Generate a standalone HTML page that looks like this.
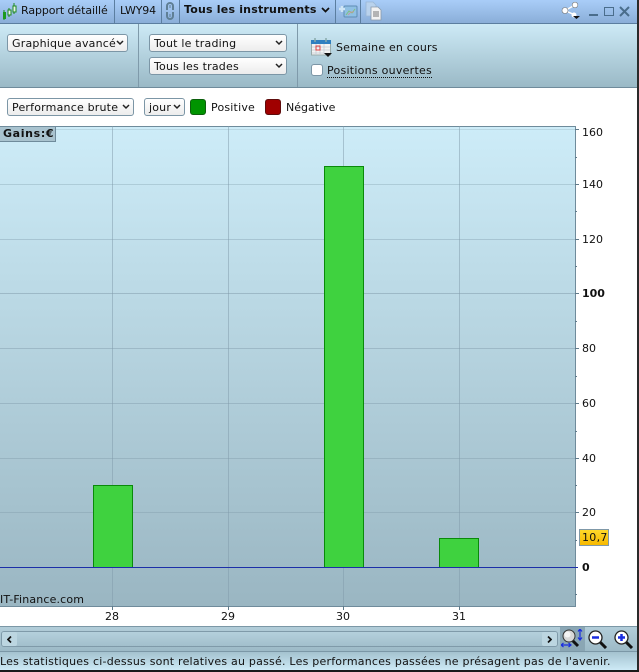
<!DOCTYPE html>
<html><head><meta charset="utf-8">
<style>
*{box-sizing:border-box}
html,body{margin:0;padding:0;width:639px;height:672px;overflow:hidden;background:#fff}
body{font:11px "DejaVu Sans",sans-serif;color:#111;position:relative}
.a{position:absolute;white-space:nowrap;line-height:14px}
.sel{position:absolute;height:18px;border:1px solid #7c96a6;border-radius:3px;background:linear-gradient(#fff,#ececec);padding-left:4px;padding-top:1px;line-height:15px;font-size:11px;letter-spacing:.2px;white-space:nowrap;overflow:hidden}
.sel svg{position:absolute;right:3px;top:5px}
.v{position:absolute;width:1px;background:#7f9aaa}
.h{position:absolute;height:1px;left:0;width:575px;background:#88a4b3}
.g{position:absolute;top:126px;height:480px;width:1px;background:#7f9aa9;opacity:.5}
.bar{position:absolute;width:40px;background:#3fd23f;border:1px solid #0a8a0a;border-bottom:none}
.t{position:absolute;left:575px;height:1px;background:#5f7a8a}
.yl{position:absolute;left:582px;line-height:12px;font-size:11px}
.xl{position:absolute;top:611px;line-height:12px;font-size:11px;width:24px;text-align:center}
</style></head><body>
<!-- top bar -->
<div class="a" style="left:0;top:0;width:639px;height:24px;background:linear-gradient(#a9cdf8,#8aaed8);border-bottom:1px solid #5b7ea0"></div>
<svg class="a" style="left:2px;top:2px" width="16" height="18" viewBox="0 0 16 18"><path d="M2 8v10M7 6v9M12 1v11" stroke="#1d8a1d" stroke-width="1"/><rect x="1" y="10" width="3" height="7" fill="#1d9a1d"/><rect x="6" y="8" width="3" height="5" fill="#e8f4e8" stroke="#1d8a1d" stroke-width="1"/><rect x="11" y="4" width="3" height="6" fill="#e8f4e8" stroke="#1d8a1d" stroke-width="1"/></svg>
<div class="a" style="left:21px;top:4px;letter-spacing:-.08px">Rapport détaillé</div>
<div class="v" style="left:114px;top:0;height:23px;background:#5b7ea0"></div>
<div class="a" style="left:120px;top:4px;letter-spacing:-.15px">LWY94</div>
<div class="v" style="left:161px;top:0;height:23px;background:#5b7ea0"></div>
<svg class="a" style="left:165px;top:1px" width="10" height="20" viewBox="0 0 10 20"><path d="M2 9V5a3 3 0 0 1 6 0v4M2 11v4a3 3 0 0 0 6 0v-4" fill="none" stroke="#5f7f95" stroke-width="2"/><path d="M5 4v3M5 13v3" stroke="#5f7f95" stroke-width="1"/></svg>
<div class="v" style="left:179px;top:0;height:23px;background:#5b7ea0"></div>
<div class="a" style="left:184px;top:3px;font-weight:bold;letter-spacing:.2px">Tous les instruments</div>
<svg class="a" style="left:321px;top:7px" width="9" height="6" viewBox="0 0 9 6"><path d="M1 1l3.500 3.500L8 1" fill="none" stroke="#111" stroke-width="1.700"/></svg>
<div class="v" style="left:335px;top:0;height:23px;background:#5b7ea0"></div>
<svg class="a" style="left:339px;top:3px" width="19" height="16" viewBox="0 0 19 16"><rect x="5" y="3" width="13" height="11" rx="1" fill="#8fc0e4" stroke="#5f8db5"/><path d="M0 6h6M3 3v6" stroke="#cfe6f6" stroke-width="2.500"/><path d="M7 12l3-4 3 2 3-4" fill="none" stroke="#7fbf80"/><path d="M9 12l3-3 3 0" fill="none" stroke="#d98f8f" stroke-width=".7"/></svg>
<div class="v" style="left:360px;top:0;height:23px;background:#5b7ea0"></div>
<svg class="a" style="left:365px;top:1px" width="17" height="20" viewBox="0 0 17 20"><path d="M1 1h7l3 3v11H1z" fill="#b9d2ec" stroke="#9ab6d4" stroke-width=".8"/><path d="M6 6h7l3 3v10H6z" fill="#f2f2f2" stroke="#8a9aaa" stroke-width=".8"/><path d="M8 11h6M8 13h6M8 15h6" stroke="#777"/></svg>
<svg class="a" style="left:560px;top:1px" width="22" height="19" viewBox="0 0 22 19"><path d="M15 4L5 9.500l11 5" fill="none" stroke="#fff" stroke-width="1.500"/><circle cx="15" cy="4" r="2.800" fill="#fff" stroke="#777" stroke-width=".6"/><circle cx="5" cy="9.500" r="3" fill="#fff" stroke="#777" stroke-width=".6"/><circle cx="14" cy="14" r="2.500" fill="#fff"/><path d="M13 15h7l-3.500 3z" fill="#111"/></svg>
<div class="a" style="left:589px;top:14px;width:9px;height:2px;background:#4a6d8c"></div>
<div class="a" style="left:604px;top:7px;width:10px;height:9px;border:1.500px solid #4a6d8c"></div>
<svg class="a" style="left:619px;top:6px" width="12" height="11" viewBox="0 0 12 11"><path d="M1 1l9 9M10 1L1 10" stroke="#4a6d8c" stroke-width="2"/></svg>
<!-- toolbar -->
<div class="a" style="left:0;top:24px;width:639px;height:64px;background:linear-gradient(#cdeaf6,#9ab9c6);border-bottom:1px solid #6f8b9b"></div>
<div class="v" style="left:138px;top:24px;height:63px"></div>
<div class="v" style="left:297px;top:24px;height:63px"></div>
<div class="sel" style="left:7px;top:34px;width:121px">Graphique avancé<svg width="8" height="6" viewBox="0 0 8 6" style="background:#f4f4f4"><path d="M1 1l3 3 3-3" fill="none" stroke="#222" stroke-width="1.500"/></svg></div>
<div class="sel" style="left:149px;top:34px;width:138px">Tout le trading<svg width="8" height="6" viewBox="0 0 8 6"><path d="M1 1l3 3 3-3" fill="none" stroke="#222" stroke-width="1.500"/></svg></div>
<div class="sel" style="left:149px;top:57px;width:138px">Tous les trades<svg width="8" height="6" viewBox="0 0 8 6"><path d="M1 1l3 3 3-3" fill="none" stroke="#222" stroke-width="1.500"/></svg></div>
<svg class="a" style="left:311px;top:38px" width="21" height="19" viewBox="0 0 21 19"><rect x=".5" y="3" width="19" height="14" fill="#f3f3f3" stroke="#9aa"/><rect x="0" y="2" width="20" height="4" fill="#2f7fc0"/><path d="M4 0v4M15 0v4" stroke="#8aa" stroke-width="1.500"/><path d="M1 9h18M1 12h18M1 15h12M5 6v11M9 6v11M13 6v11" stroke="#c4ccd4" stroke-width=".8"/><rect x="5" y="8" width="4" height="4" fill="none" stroke="#e04040"/><path d="M13 15h8l-4 4z" fill="#111"/></svg>
<div class="a" style="left:336px;top:41px;letter-spacing:.18px">Semaine en cours</div>
<div class="a" style="left:311px;top:64px;width:12px;height:12px;background:#fff;border:1px solid #7c96a6;border-radius:3px"></div>
<div class="a" style="left:327px;top:64px;border-bottom:1px dotted #111;line-height:13px;letter-spacing:.26px">Positions ouvertes</div>
<!-- filters -->
<div class="sel" style="left:7px;top:98px;width:127px">Performance brute<svg width="8" height="6" viewBox="0 0 8 6"><path d="M1 1l3 3 3-3" fill="none" stroke="#222" stroke-width="1.500"/></svg></div>
<div class="sel" style="left:144px;top:98px;width:41px">jour<svg width="8" height="6" viewBox="0 0 8 6"><path d="M1 1l3 3 3-3" fill="none" stroke="#222" stroke-width="1.500"/></svg></div>
<div class="a" style="left:190px;top:99px;width:16px;height:16px;background:#009400;border:1px solid #0c5f0c;border-radius:3px"></div>
<div class="a" style="left:211px;top:101px;letter-spacing:.2px">Positive</div>
<div class="a" style="left:265px;top:99px;width:16px;height:16px;background:#a00000;border:1px solid #5f0c0c;border-radius:3px"></div>
<div class="a" style="left:286px;top:101px;letter-spacing:0">Négative</div>
<!-- plot -->
<div class="a" style="left:0;top:126px;width:576px;height:481px;background:linear-gradient(#cdecf8,#9ab6c2);border-top:1px solid #6f8b9b;border-right:1px solid #6f8b9b;border-bottom:1px solid #6f8b9b"></div>
<div class="h" style="top:129px;opacity:.3"></div>
<div class="h" style="top:184px;opacity:.4"></div>
<div class="h" style="top:239px;opacity:.45"></div>
<div class="h" style="top:293px;opacity:.6"></div>
<div class="h" style="top:348px;opacity:.55"></div>
<div class="h" style="top:403px;opacity:.55"></div>
<div class="h" style="top:458px;opacity:.55"></div>
<div class="h" style="top:512px;opacity:.55"></div>
<div class="g" style="left:112px"></div>
<div class="g" style="left:228px"></div>
<div class="g" style="left:343px"></div>
<div class="g" style="left:459px"></div>
<div class="bar" style="left:93px;top:485px;height:82px"></div>
<div class="bar" style="left:324px;top:166px;height:401px"></div>
<div class="bar" style="left:439px;top:538px;height:29px"></div>
<div class="a" style="left:0;top:567px;width:578px;height:1px;background:#1c2fa8"></div>
<div class="a" style="left:0;top:127px;width:56px;height:15px;background:#a9c3cf;border-right:1px solid #6f8b9b;border-bottom:1px solid #6f8b9b;font-weight:bold;padding-left:3px;line-height:14px;letter-spacing:.65px">Gains:€</div>
<div class="a" style="left:0;top:593px;line-height:14px;letter-spacing:.15px">IT-Finance.com</div>
<!-- y axis -->
<div class="t" style="top:129px;width:4px"></div><div class="t" style="top:157px;width:2px"></div>
<div class="t" style="top:184px;width:4px"></div><div class="t" style="top:211px;width:2px"></div>
<div class="t" style="top:239px;width:4px"></div><div class="t" style="top:266px;width:2px"></div>
<div class="t" style="top:293px;width:4px"></div><div class="t" style="top:321px;width:2px"></div>
<div class="t" style="top:348px;width:4px"></div><div class="t" style="top:376px;width:2px"></div>
<div class="t" style="top:403px;width:4px"></div><div class="t" style="top:431px;width:2px"></div>
<div class="t" style="top:458px;width:4px"></div><div class="t" style="top:485px;width:2px"></div>
<div class="t" style="top:512px;width:4px"></div><div class="t" style="top:540px;width:2px"></div>
<div class="t" style="top:594px;width:2px"></div>
<div class="yl" style="top:127px">160</div>
<div class="yl" style="top:179px">140</div>
<div class="yl" style="top:234px">120</div>
<div class="yl" style="top:288px;font-weight:bold">100</div>
<div class="yl" style="top:343px">80</div>
<div class="yl" style="top:398px">60</div>
<div class="yl" style="top:453px">40</div>
<div class="yl" style="top:507px">20</div>
<div class="yl" style="top:562px;font-weight:bold">0</div>
<div class="a" style="left:579px;top:529px;width:30px;height:17px;background:linear-gradient(#ffd82a,#f7b900);border:1px solid #7f98a8;line-height:16px;padding-left:2px;letter-spacing:.3px">10,7</div>
<!-- x axis -->
<div class="t" style="left:112px;top:606px;width:1px;height:4px"></div>
<div class="t" style="left:228px;top:606px;width:1px;height:4px"></div>
<div class="t" style="left:343px;top:606px;width:1px;height:4px"></div>
<div class="t" style="left:459px;top:606px;width:1px;height:4px"></div>
<div class="xl" style="left:100px">28</div>
<div class="xl" style="left:216px">29</div>
<div class="xl" style="left:331px">30</div>
<div class="xl" style="left:447px">31</div>
<!-- scrollbar -->
<div class="a" style="left:0;top:626px;width:637px;height:26px;background:linear-gradient(#b2cdd9,#9dbac7);border-top:1px solid #7b97a6;border-bottom:1px solid #7b97a6"></div>
<div class="a" style="left:1px;top:631px;width:557px;height:16px;background:linear-gradient(#b4d0dc,#a2bfcc);border:1px solid #7f9aa9;border-radius:3px"></div>
<div class="a" style="left:2px;top:632px;width:15px;height:14px;background:#bcd6e1;border-radius:2px"></div>
<div class="a" style="left:542px;top:632px;width:15px;height:14px;background:#bcd6e1;border-radius:2px"></div>
<svg class="a" style="left:7px;top:636px" width="5" height="7" viewBox="0 0 5 7"><path d="M4 .5L1 3.500 4 6.500" fill="none" stroke="#111" stroke-width="1.700"/></svg>
<svg class="a" style="left:547px;top:636px" width="5" height="7" viewBox="0 0 5 7"><path d="M1 .5L4 3.500 1 6.500" fill="none" stroke="#111" stroke-width="1.700"/></svg>
<div class="a" style="left:560px;top:627px;width:25px;height:24px;background:#8aa6b4"></div>
<svg class="a" style="left:561px;top:629px" width="24" height="20" viewBox="0 0 24 20"><path d="M11 11l6 6" stroke="#111" stroke-width="3"/><circle cx="8" cy="7" r="6" fill="#d8d8d8" stroke="#333"/><circle cx="6.500" cy="5.500" r="3" fill="#f4f4f4"/><path d="M19 0v11M17 2.500l2-2.500 2 2.500M17 8.500l2 2.500 2-2.500M0 16h10M2.500 14L0 16l2.500 2M7.500 14L10 16l-2.500 2" fill="none" stroke="#1a2ee0" stroke-width="1.200"/></svg>
<svg class="a" style="left:588px;top:630px" width="20" height="19" viewBox="0 0 20 19"><path d="M11 11l7 7" stroke="#111" stroke-width="3"/><circle cx="7.500" cy="7.500" r="6.500" fill="#fff" stroke="#222" stroke-width="1.300"/><path d="M4 7.500h7" stroke="#1a2ee0" stroke-width="2.500"/></svg>
<svg class="a" style="left:614px;top:630px" width="20" height="19" viewBox="0 0 20 19"><path d="M11 11l7 7" stroke="#111" stroke-width="3"/><circle cx="7.500" cy="7.500" r="6.500" fill="#fff" stroke="#222" stroke-width="1.300"/><path d="M4 7.500h7M7.500 4v7" stroke="#1a2ee0" stroke-width="2.500"/></svg>
<!-- status -->
<div class="a" style="left:0;top:652px;width:637px;height:18px;background:linear-gradient(#a4c2cf,#cdeaf6);line-height:19px;padding-left:0;font-size:11px;letter-spacing:.225px">Les statistiques ci-dessus sont relatives au passé. Les performances passées ne présagent pas de l'avenir.</div>
<div class="a" style="left:637px;top:0;width:2px;height:672px;background:#2a2a2a"></div>
<div class="a" style="left:0;top:670px;width:639px;height:2px;background:#1a1a1a"></div>
</body></html>
